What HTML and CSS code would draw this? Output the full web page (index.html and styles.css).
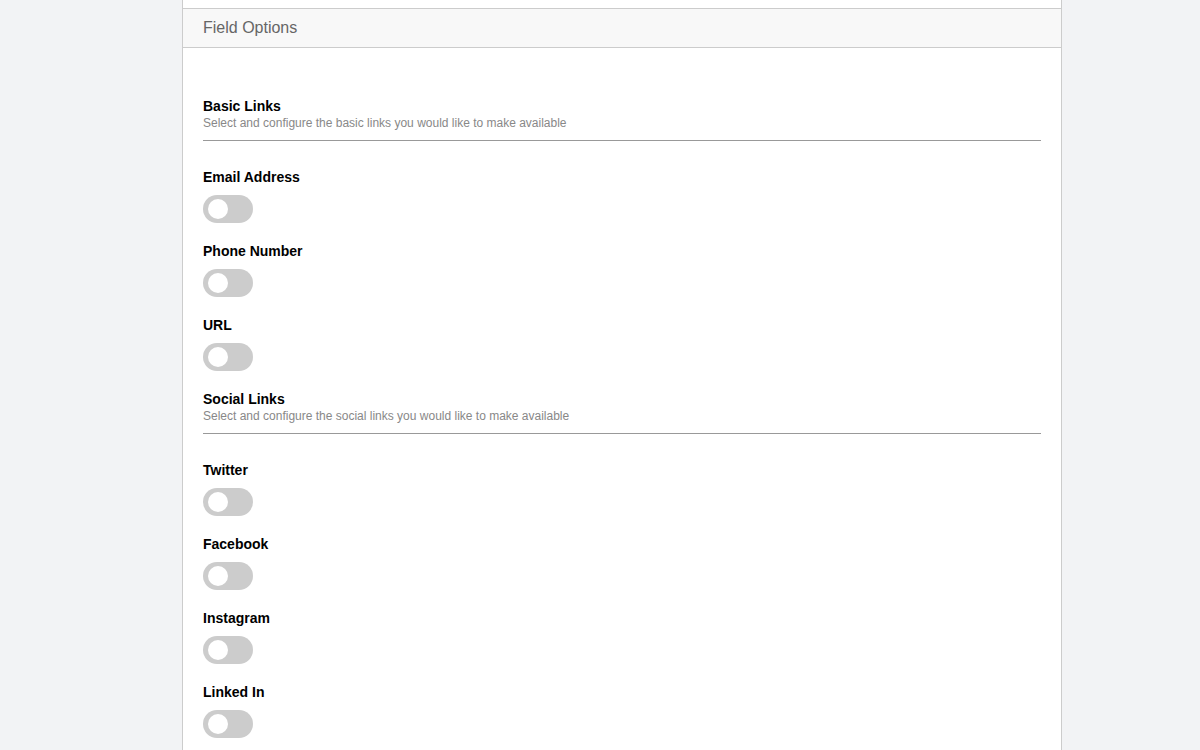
FILE: index.html
```html
<!DOCTYPE html>
<html lang="en">
<head>
    <meta charset="UTF-8">
    <meta name="viewport" content="width=device-width, initial-scale=1.0">
    <title>Field Options</title>
    <link rel="stylesheet" href="styles.css">
</head>
<body>
    <div class="panel">
        <div class="panel-top"></div>
        <div class="panel-header">Field Options</div>
        <div class="panel-body">

            <div class="section">
                <h3>Basic Links</h3>
                <p>Select and configure the basic links you would like to make available</p>
            </div>

            <div class="field">
                <label>Email Address</label>
                <span class="toggle"><input type="checkbox"><span class="knob"></span></span>
            </div>
            <div class="field">
                <label>Phone Number</label>
                <span class="toggle"><input type="checkbox"><span class="knob"></span></span>
            </div>
            <div class="field">
                <label>URL</label>
                <span class="toggle"><input type="checkbox"><span class="knob"></span></span>
            </div>

            <div class="section">
                <h3>Social Links</h3>
                <p>Select and configure the social links you would like to make available</p>
            </div>

            <div class="field">
                <label>Twitter</label>
                <span class="toggle"><input type="checkbox"><span class="knob"></span></span>
            </div>
            <div class="field">
                <label>Facebook</label>
                <span class="toggle"><input type="checkbox"><span class="knob"></span></span>
            </div>
            <div class="field">
                <label>Instagram</label>
                <span class="toggle"><input type="checkbox"><span class="knob"></span></span>
            </div>
            <div class="field">
                <label>Linked In</label>
                <span class="toggle"><input type="checkbox"><span class="knob"></span></span>
            </div>
        </div>
    </div>
</body>
</html>
```

FILE: styles.css
```css
body {
    font-family: "Liberation Sans", Arial, sans-serif;
    margin: 0;
    padding: 0;
    background-color: #f2f3f5;
}

.panel {
    width: 880px;
    margin-left: 182px;
    box-sizing: border-box;
    background-color: #ffffff;
    border-left: 1px solid #cccccc;
    border-right: 1px solid #cccccc;
}

.panel-top {
    height: 8px;
}

.panel-header {
    height: 38px;
    line-height: 38px;
    padding: 0 20px;
    font-size: 16px;
    color: #666666;
    background-color: #f8f8f8;
    border-top: 1px solid #cccccc;
    border-bottom: 1px solid #cccccc;
}

.panel-body {
    padding: 50px 20px 20px 20px;
}

.section {
    padding-bottom: 9px;
    margin-bottom: 28px;
    border-bottom: 1px solid #999999;
}

.section h3 {
    margin: 0 0 1px 0;
    font-size: 14px;
    line-height: 16px;
    font-weight: bold;
    color: #000000;
}

.section p {
    margin: 0;
    font-size: 12px;
    line-height: 16px;
    color: #888888;
}

.field {
    margin-bottom: 20px;
}

.field label {
    display: block;
    font-size: 14px;
    line-height: 16px;
    font-weight: bold;
    color: #000000;
    margin-bottom: 10px;
}

.toggle {
    position: relative;
    display: block;
    width: 50px;
    height: 28px;
    border-radius: 14px;
    background-color: #cccccc;
}

.toggle input {
    opacity: 0;
    width: 0;
    height: 0;
    margin: 0;
}

.knob {
    position: absolute;
    left: 5px;
    top: 4px;
    width: 20px;
    height: 20px;
    border-radius: 50%;
    background-color: #ffffff;
}
```
